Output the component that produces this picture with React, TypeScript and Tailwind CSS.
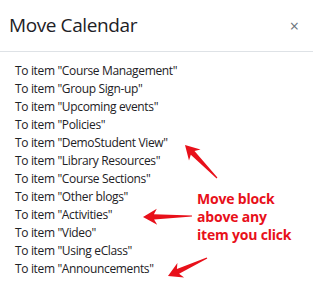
import React from "react";

const items = [
  "Course Management",
  "Group Sign-up",
  "Upcoming events",
  "Policies",
  "DemoStudent View",
  "Library Resources",
  "Course Sections",
  "Other blogs",
  "Activities",
  "Video",
  "Using eClass",
  "Announcements",
];

function arrowPoints(x1: number, y1: number, x2: number, y2: number) {
  const dx = x2 - x1;
  const dy = y2 - y1;
  const len = Math.sqrt(dx * dx + dy * dy);
  const ux = dx / len;
  const uy = dy / len;
  const px = -uy;
  const py = ux;
  const headLen = 14;
  const headW = 8;
  const shaftW = 2.6;
  const tailW = 0.6;
  const bx = x2 - ux * headLen;
  const by = y2 - uy * headLen;
  const pts = [
    [x1 + px * tailW, y1 + py * tailW],
    [bx + ux * 3 + px * shaftW, by + uy * 3 + py * shaftW],
    [bx + px * headW, by + py * headW],
    [x2, y2],
    [bx - px * headW, by - py * headW],
    [bx + ux * 3 - px * shaftW, by + uy * 3 - py * shaftW],
    [x1 - px * tailW, y1 - py * tailW],
  ];
  return pts.map((p) => p.map((v) => v.toFixed(1)).join(",")).join(" ");
}

export default function App() {
  return (
    <div
      className="relative w-[313px] h-[293px] bg-white overflow-hidden"
      style={{ fontFamily: '"Open Sans", "Noto Sans", sans-serif' }}
    >
      <div className="flex items-center justify-between h-[52px] pl-[9px] pr-[14px] border-b border-[#dee2e6]">
        <h5 className="text-[19px] leading-none text-[#1d2125] tracking-[-0.4px]">Move Calendar</h5>
        <span className="text-[16px] leading-none text-[#6a737b]">×</span>
      </div>
      <ul className="pl-[15px] pt-[10px] text-[12px] leading-[18px] text-[#1d2125] tracking-[-0.35px]">
        {items.map((it) => (
          <li key={it}>To item "{it}"</li>
        ))}
      </ul>
      <div className="absolute left-[197px] top-[190px] text-[14px] leading-[18px] font-bold text-[#e8101a] tracking-[-0.2px]">
        <div>Move block</div>
        <div>above any</div>
        <div>item you click</div>
      </div>
      <svg className="absolute left-0 top-0" width="313" height="293">
        <polygon points={arrowPoints(217, 178, 185, 145)} fill="#e8101a" />
        <polygon points={arrowPoints(192, 216, 143, 217)} fill="#e8101a" />
        <polygon points={arrowPoints(207, 258, 168, 276)} fill="#e8101a" />
      </svg>
    </div>
  );
}
